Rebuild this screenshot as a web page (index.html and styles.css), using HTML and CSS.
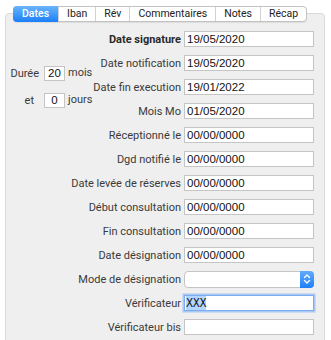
FILE: index.html
```html
<html>
<head>
    <title>Dates</title>
    <link rel="stylesheet" href="styles.css">
</head>
<body>

<div class="tabs">
    <span class="tab active">Dates</span>
    <span class="tab">Iban</span>
    <span class="tab">Rév</span>
    <span class="tab">Commentaires</span>
    <span class="tab">Notes</span>
    <span class="tab">Récap</span>
</div>

<div class="panel">
<div class="form">
    <div class="duree">
        <span class="dlabel">Durée</span><span class="small-field">20</span><span class="unit">mois</span>
        <span class="dlabel et">et</span><span class="small-field">0</span><span class="unit">jours</span>
    </div>

    <span class="label bold">Date signature</span><span class="field">19/05/2020</span>
    <span class="label near">Date notification</span><span class="field">19/05/2020</span>
    <span class="label near">Date fin execution</span><span class="field">19/01/2022</span>
    <span class="label near">Mois Mo</span><span class="field">01/05/2020</span>
    <span class="label">Réceptionné le</span><span class="field">00/00/0000</span>
    <span class="label">Dgd notifié le</span><span class="field">00/00/0000</span>
    <span class="label">Date levée de réserves</span><span class="field">00/00/0000</span>
    <span class="label">Début consultation</span><span class="field">00/00/0000</span>
    <span class="label">Fin consultation</span><span class="field">00/00/0000</span>
    <span class="label">Date désignation</span><span class="field">00/00/0000</span>
    <span class="label">Mode de désignation</span>
    <span class="select">
        <span class="stepper">
            <svg width="14" height="16" viewBox="0 0 14 16">
                <path d="M4.5 6.5 L7 4 L9.5 6.5 M4.5 9.5 L7 12 L9.5 9.5" fill="none" stroke="#fff" stroke-width="1.4" stroke-linecap="round" stroke-linejoin="round"/>
            </svg>
        </span>
    </span>
    <span class="label">Vérificateur</span><span class="field focused"><span class="selected">XXX</span></span>
    <span class="label">Vérificateur bis</span><span class="field"></span>
</div>
</div>

</body>
</html>
```

FILE: styles.css
```css
body {
    margin: 0;
    background: #fff;
    font-family: Roboto, "Liberation Sans", sans-serif;
    font-size: 11px;
    color: #3a3a3a;
}
.tabs {
    position: relative;
    z-index: 1;
    display: flex;
    width: max-content;
    height: 16px;
    box-sizing: border-box;
    margin: 6px 0 0 13px;
    background: #fff;
    border: 1px solid #c2c2c2;
    border-radius: 4px;
    box-shadow: 0 1px 1px rgba(0,0,0,0.08);
    font-size: 10.5px;
}
.tab {
    padding: 0 8px;
    line-height: 14px;
    color: #222;
    border-left: 1px solid #d2d2d2;
}
.tab:first-child {
    border-left: 0;
}
.tab.active {
    margin: -1px 0 -1px -1px;
    padding: 0 9px;
    line-height: 16px;
    font-weight: 500;
    color: #fff;
    background: linear-gradient(#6ab4fb, #1b7ff9);
    border-radius: 4px 0 0 4px;
}
.panel {
    width: 320px;
    height: 340px;
    box-sizing: border-box;
    margin: -9px 0 0 5px;
    padding: 13px 10px 0 0;
    background: #efefef;
    border: 1px solid #d9d9d9;
    border-radius: 4px;
}
.form {
    display: grid;
    grid-template-columns: 83px 89px 130px;
    grid-auto-rows: 24px;
    column-gap: 3px;
}
.label {
    grid-column: 1 / 3;
    align-self: center;
    text-align: right;
    white-space: nowrap;
}
.label.near {
    grid-column: 2;
}
.bold {
    font-weight: bold;
    color: #2a2a2a;
}
.field, .select {
    grid-column: 3;
    align-self: center;
    height: 16px;
    box-sizing: border-box;
    background: #fff;
    border: 1px solid #c4c4c4;
}
.field {
    padding: 0 2px;
    font-family: "Liberation Sans", sans-serif;
    font-size: 11.5px;
    line-height: 14px;
    color: #111;
}
.field.focused {
    padding: 0 1px;
    border-color: #7eadef;
    box-shadow: 0 0 0 1.5px #a9c8f3;
}
.selected {
    background: #b4d5fe;
    font-family: "DejaVu Sans Condensed", "Liberation Sans Narrow", sans-serif;
    letter-spacing: -0.3px;
}
.select {
    display: flex;
    justify-content: flex-end;
    height: 17px;
    border-radius: 4px;
}
.stepper {
    display: flex;
    width: 14px;
    margin: -1px -1px -1px 0;
    height: 17px;
    background: linear-gradient(#63abfb, #1d80f8);
    border-radius: 0 4px 4px 0;
}
.duree {
    grid-column: 1;
    grid-row: 2 / 5;
    align-self: center;
    display: grid;
    grid-template-columns: 33px 21px auto;
    column-gap: 5px;
    row-gap: 12px;
    align-items: center;
}
.dlabel {
    text-align: right;
}
.dlabel.et {
    padding-right: 5px;
}
.small-field {
    height: 15px;
    box-sizing: border-box;
    background: #fff;
    border: 1px solid #c4c4c4;
    text-align: center;
    font-family: "Liberation Sans", sans-serif;
    font-size: 11.5px;
    line-height: 13px;
    color: #111;
}
.unit {
    margin-left: -2px;
    margin-top: -3px;
}
```
